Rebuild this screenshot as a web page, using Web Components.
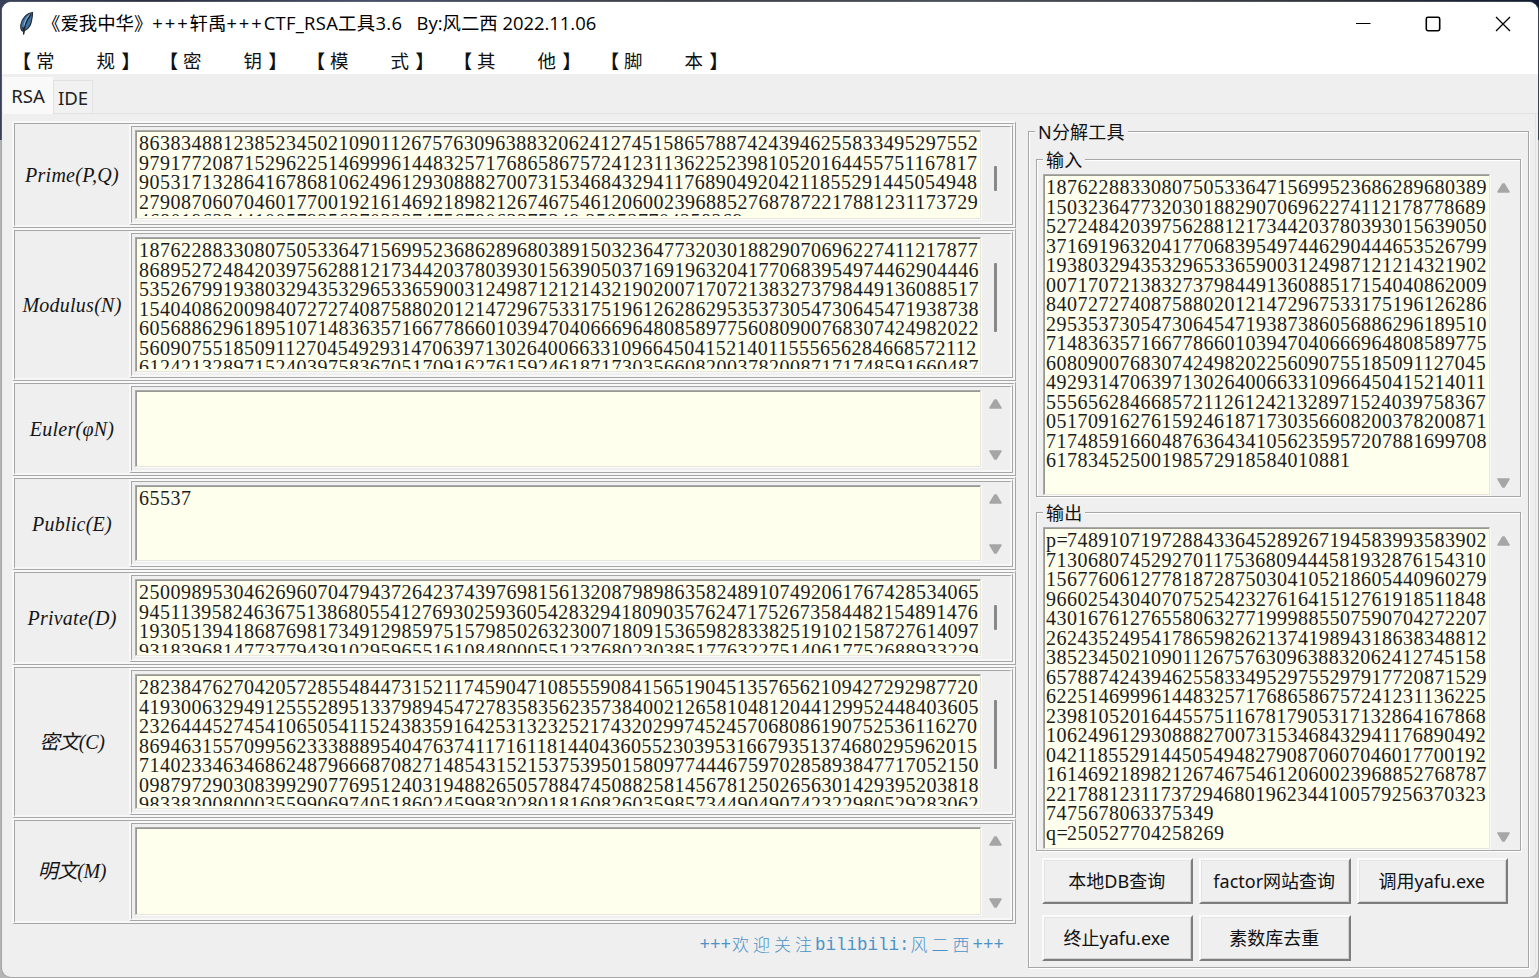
<!DOCTYPE html>
<html lang="zh-CN">
<head>
<meta charset="utf-8">
<title>CTF_RSA工具3.6</title>
<style>
  html, body { margin: 0; height: 100%; overflow: hidden; }
  body { font-family: "Noto Sans", "Noto Sans CJK SC", sans-serif; font-size: 18px; color: #111; }
</style>
</head>
<body>
<rsa-window></rsa-window>
<script>
const N = "187622883308075053364715699523686289680389150323647732030188290706962274112178778689527248420397562881217344203780393015639050371691963204177068395497446290444653526799193803294353296533659003124987121214321902007170721383273798449136088517154040862009840727274087588020121472967533175196126286295353730547306454719387386056886296189510714836357166778660103947040666964808589775608090076830742498202256090755185091127045492931470639713026400663310966450415214011555656284668572112612421328971524039758367051709162761592461871730356608200378200871717485916604876364341056235957207881699708" + "61783452500198572918584010881";
const P = "7489107197288433645289267194583993583902713068074529270117536809444581932876154310156776061277818728750304105218605440960279966025430407075254232761641512761918511848430167612765580632771999885507590704272207262435249541786598262137419894318638348812385234502109011267576309638832062412745158657887424394625583349529755297917720871529622514699961448325717686586757241231136225239810520164455751167817905317132864167868106249612930888270073153468432941176890492042118552914450549482790870607046017700192161469218982126746754612060023968852768787221788123117372946801962344100579256370323" + "7475678063375349";
const Q = "250527704258269";
const D = "25009895304626960704794372642374397698156132087989863582489107492061767428534065" +
  "94511395824636751386805541276930259360542832941809035762471752673584482154891476" +
  "19305139418687698173491298597515798502632300718091536598283382519102158727614097" +
  "93183968147737794391029596551610848000551237680230385177632275140617752688933229";
const C = "28238476270420572855484473152117459047108555908415651904513576562109427292987720" +
  "41930063294912555289513379894547278358356235738400212658104812044129952448403605" +
  "23264445274541065054115243835916425313232521743202997452457068086190752536116270" +
  "86946315570995623338889540476374117161181440436055230395316679351374680295962015" +
  "71402334634686248796668708271485431521537539501580977444675970285893847717052150" +
  "09879729030839929077695124031948826505788474508825814567812502656301429395203818" +
  "98338300800035599069740518602459983028018160826035985734490490742322980529283062";

const VALUES = {
  prime: P.slice(P.indexOf("8638348812")) + " " + Q,
  n: N.slice(0, 560), e: "65537", d: D, c: C,
  input: N, output: "p=" + P + "\nq=" + Q
};

class Base extends HTMLElement {
  connectedCallback() {
    if (this.shadowRoot) return;
    this.attachShadow({ mode: "open" }).innerHTML = this.view();
  }
}

/* sunken text area; wraps its value at a fixed number of columns */
customElements.define("text-area", class extends Base {
  view() {
    const cols = +this.getAttribute("cols");
    const value = VALUES[this.getAttribute("value")] || "";
    const lines = value.split("\n").flatMap(l => l.match(new RegExp(".{1," + cols + "}", "g")) || []);
    const html = lines.map(l => "<div>" + l.replace("=", "<i>=</i>") + "</div>").join("");
    return `<style>
      :host { display: block; box-sizing: border-box; overflow: hidden; background: #ffffed;
        border: 1px solid; border-color: #aaa #e6e6dc #e6e6dc #aaa;
        box-shadow: inset 1px 1px 0 #98988f, 1px 1px 0 #fafafa;
        color: #1c1c1c; }
      .clip { box-sizing: border-box; height: calc(100% + 1px); margin-bottom: -1px; overflow: hidden; padding: 3px 0 0 var(--pl, 3px);
        clip-path: inset(0 0 3px 0); }
      div div { font: 20px/19.53px "Liberation Serif", serif; letter-spacing: .5px; white-space: pre; height: 19.53px; }
      i { font-style: normal; letter-spacing: -.78px; }
    </style><div class="clip">${html}</div>`;
  }
});

/* vertical scrollbar: arrows when idle, or a thin thumb */
customElements.define("scroll-bar", class extends Base {
  view() {
    const thumb = this.getAttribute("thumb");
    const [top, h] = (thumb || "0 0").split(" ");
    return `<style>
      :host { display: flex; flex-direction: column; align-items: center; justify-content: space-between;
        box-sizing: border-box; width: 28px; padding: var(--pt, 9px) 0 var(--pb, 7px); }
      :host([thumb]) { justify-content: flex-start; padding: ${top}px 0 0; }
      b { width: 3px; height: ${h}px; background: #888; border-radius: 1px; }
      svg { display: block; fill: #a6a6a6; stroke: #a6a6a6; stroke-width: 1.5; stroke-linejoin: round; }
    </style>` + (thumb ? "<b></b>" :
      `<svg width="13" height="10"><path d="M5.8 1 H7.2 L12 9 H1Z"/></svg>
       <svg width="13" height="10"><path d="M1 1 H12 L7.2 9 H5.8Z"/></svg>`);
  }
});

customElements.define("field-row", class extends Base {
  view() {
    const thumb = this.getAttribute("thumb");
    return `<style>
      :host { display: block; box-sizing: border-box; height: var(--h);
        border: solid; border-width: 2px 1px 1px 2px; border-color: #f9f9f9 #a6a6a6 #a6a6a6 #f9f9f9; }
      .row { display: flex; box-sizing: border-box; height: 100%; border: solid;
        border-width: 1px 2px 2px 1px; border-color: #a6a6a6 #f7f7f7 #f7f7f7 #a6a6a6; }
      .label { box-sizing: border-box; width: 114px; display: flex; align-items: center; justify-content: center; white-space: nowrap;
        padding-top: 2px; letter-spacing: .25px; font: italic 20px "Liberation Serif", "Noto Sans CJK SC", serif; color: #151515; }
      :host([cjk]) .label { padding: 0 0 3px; letter-spacing: -.3px; }
      .pane { flex: 1; display: flex; box-sizing: border-box; border: solid;
        border-width: 2px 1px 1px 2px; border-color: #f9f9f9 #a6a6a6 #a6a6a6 #f9f9f9; }
      .in { flex: 1; display: flex; border: solid; border-width: 1px 2px 2px 1px;
        border-color: #a6a6a6 #f7f7f7 #f7f7f7 #a6a6a6; padding: 3px 0 3px 3px; }
      text-area { width: 846px; }
    </style>
    <div class="row"><div class="label"><slot></slot></div>
      <div class="pane"><div class="in"><text-area cols="80" value="${this.getAttribute("value")}"></text-area>
      <scroll-bar ${thumb ? `thumb="${thumb}"` : ""}></scroll-bar></div></div></div>`;
  }
});

customElements.define("group-box", class extends Base {
  view() {
    return `<style>
      :host { display: flex; flex-direction: column; box-sizing: border-box; border: 1px solid #a6a6a6;
        box-shadow: inset 1px 1px 0 #fff, 1px 1px 0 #fff; }
      header { height: 0; display: flex; align-items: center; padding-left: 6px; }
      header span { background: #efefef; padding: 0 3px; line-height: 22px; white-space: nowrap; color: #111; letter-spacing: .2px; }
      .body { flex: 1; display: flex; flex-direction: column; min-height: 0; }
    </style><header><span>${this.getAttribute("label")}</span></header><div class="body"><slot></slot></div>`;
  }
});

customElements.define("push-button", class extends Base {
  view() {
    return `<style>
      :host { display: flex; align-items: center; justify-content: center; box-sizing: border-box;
        height: 46px; background: #efefef; border: 2px solid;
        border-color: #fbfbfb #7d7d7d #7d7d7d #fbfbfb; box-shadow: inset 1px 1px 0 #e4e4e4, inset -1px -1px 0 #d2d2d2;
        white-space: nowrap; padding: 0 1px 2px 0; }
    </style><span><slot></slot></span>`;
  }
});

customElements.define("title-bar", class extends Base {
  view() {
    return `<style>
      :host { display: flex; height: 46px; align-items: center; background: #fff; color: #000; font-size: 18.4px; white-space: pre; }
      .icon { margin-left: 16px; width: 17px; height: 26px; padding-bottom: 3px; }
      .t { margin-left: 7px; flex: 1; padding-bottom: 6px; font-family: "Open Sans", "Noto Sans CJK SC", sans-serif; font-weight: 400; }
      .t i { font-style: normal; letter-spacing: 1.9px; }
      .t u { text-decoration: none; letter-spacing: .3px; }
      .w { width: 70px; display: flex; justify-content: center; padding-bottom: 2px; }
      .w svg { display: block; fill: none; stroke: #000; stroke-width: 1.3; }
    </style>
    <svg class="icon" viewBox="0 0 17 26">
      <path d="M14.5 1.5 C9 2 3.5 8 2.8 14 C2.5 17 3 19 4.4 20 C8.5 19.5 12 16 13 12 C13.6 8.5 14.8 5 14.5 1.5Z" fill="#3d6f9f" stroke="#27323c" stroke-width="1.2"/>
      <path d="M12 4 C9 7 7 11 6.5 15" fill="none" stroke="#7fb6e2" stroke-width="2"/>
      <path d="M13 3.5 C8.5 9 6 14 5.6 23.5" fill="none" stroke="#1c2228" stroke-width="1.3"/>
      <path d="M4 16 L5.6 24 L7.4 18Z" fill="#23292f"/>
    </svg>
    <div class="t">《爱我中华》<i>+++</i>轩禹<i>+++</i><u>CTF_RSA工具3.6</u>   By:风二西 2022.11.06</div>
    <div class="w"><svg width="16" height="16"><path d="M1 7.5H15.5" stroke-width="1"/></svg></div>
    <div class="w"><svg width="16" height="16"><rect x="1.3" y="1.3" width="13.4" height="13.4" rx="1.6" stroke-width="1.6"/></svg></div>
    <div class="w"><svg width="16" height="16"><path d="M1 1L15 15M15 1L1 15"/></svg></div>`;
  }
});

customElements.define("menu-item", class extends Base {
  view() {
    const [a, b] = this.getAttribute("text");
    return `<style>
      :host { display: flex; width: 147px; line-height: 26px; white-space: pre; font-family: "Noto Sans CJK SC", sans-serif; font-size: 18.5px; }
      span { margin-top: -1px; }
      .o { width: 29px; display: flex; justify-content: flex-end; margin-right: 5px; } .a { width: 60.5px; } .b { width: 25px; }
      .o, .c { font-weight: 700; }
    </style><span class="o">【</span><span class="a">${a}</span><span class="b">${b}</span><span class="c">】</span>`;
  }
});

customElements.define("tab-strip", class extends Base {
  view() {
    return `<style>
      :host { display: flex; height: 40px; box-sizing: border-box; align-items: flex-end; border-bottom: 1px solid #e2e2e2; padding-left: 1px; color: #222; font-size: 18.6px; }
      span { box-sizing: border-box; text-align: center; }
      .on { width: 50px; height: 37px; line-height: 37px; background: #f9f9f9; margin-bottom: -1px; }
      .off { width: 40px; height: 33px; line-height: 34px; border: 1px solid #e2e2e2; border-bottom: 0; background: #f1f1f1; }
    </style><span class="on">RSA</span><span class="off">IDE</span>`;
  }
});

customElements.define("rsa-window", class extends Base {
  view() {
    return `<style>
      :host { display: block; box-sizing: border-box; width: 1539px; height: 978px; padding: 2px 1px 1px 2px;
        background: linear-gradient(90deg, #39415a 0, #2b3040 10%, #46506a 24%, #3c4049 45%, #49505c 62%, #34363d 85%, #101c33 100%) 0 0 / 100% 140px no-repeat, #b4b4b4; }
      .win { box-sizing: border-box; height: 975px; border-radius: 9px; overflow: hidden; background: #efefef;
        display: flex; flex-direction: column; box-shadow: 0 0 0 1px #8e8e8e55; }
      nav { display: flex; height: 26px; background: #fff; flex: none; }
      title-bar, tab-strip { flex: none; }
      main { display: flex; align-items: flex-start; padding: 7px 0 0 10px; border-right: 1px solid #e2e2e2; margin-right: 2px; }
      .left { width: 1004px; display: flex; flex-direction: column; }
      .foot { display: flex; justify-content: flex-end; align-items: center; height: 42px; padding-right: 12px; color: #4a93c9;
        font-family: "Liberation Mono", "Noto Sans CJK SC", monospace; font-size: 17.5px; white-space: pre; }
      .foot span { font-size: 17px; letter-spacing: 4px; font-weight: 300; padding: 0 0 3px 1px; margin-right: -1px; }
      .all { width: 501px; height: 837px; margin: 10px 0 0 12px; }
      .g { margin: 0 7px 0 7px; }
      .g1 { height: 338px; margin-top: 27px; } .g2 { height: 339px; margin-top: 15px; }
      .ta { display: flex; flex: 1; padding: 14px 0 1px 6px; --pt: 9px; --pb: 7px; --pl: 2px; min-height: 0; }
      .ta text-area { width: 447px; } .ta scroll-bar { width: 27px; }
      .btns { display: grid; grid-template-columns: repeat(3, 151.5px); gap: 11px 6px; padding: 7px 0 0 12.5px; }
    </style>
    <div class="win">
      <title-bar></title-bar>
      <nav><menu-item text="常规"></menu-item><menu-item text="密钥"></menu-item><menu-item text="模式"></menu-item><menu-item text="其他"></menu-item><menu-item text="脚本"></menu-item></nav>
      <tab-strip></tab-strip>
      <main>
        <div class="left">
          <field-row style="--h:107px" value="prime" thumb="36 25">Prime(P,Q)</field-row>
          <field-row style="--h:153px" value="n" thumb="26 69">Modulus(N)</field-row>
          <field-row style="--h:95px">Euler(φN)</field-row>
          <field-row style="--h:94px" value="e">Public(E)</field-row>
          <field-row style="--h:95px" value="d" thumb="26 25">Private(D)</field-row>
          <field-row style="--h:153px" value="c" thumb="26 69" cjk>密文(C)</field-row>
          <field-row style="--h:106px" cjk>明文(M)</field-row>
          <div class="foot">+++<span>欢迎关注</span>bilibili:<span>风二西</span>+++</div>
        </div>
        <group-box class="all" label="N分解工具">
          <group-box class="g g1" label="输入"><div class="ta"><text-area cols="42" value="input"></text-area><scroll-bar></scroll-bar></div></group-box>
          <group-box class="g g2" label="输出"><div class="ta"><text-area cols="42" value="output"></text-area><scroll-bar></scroll-bar></div></group-box>
          <div class="btns"><push-button>本地DB查询</push-button><push-button>factor网站查询</push-button><push-button>调用yafu.exe</push-button><push-button>终止yafu.exe</push-button><push-button>素数库去重</push-button></div>
        </group-box>
      </main>
    </div>`;
  }
});
</script>
</body>
</html>
